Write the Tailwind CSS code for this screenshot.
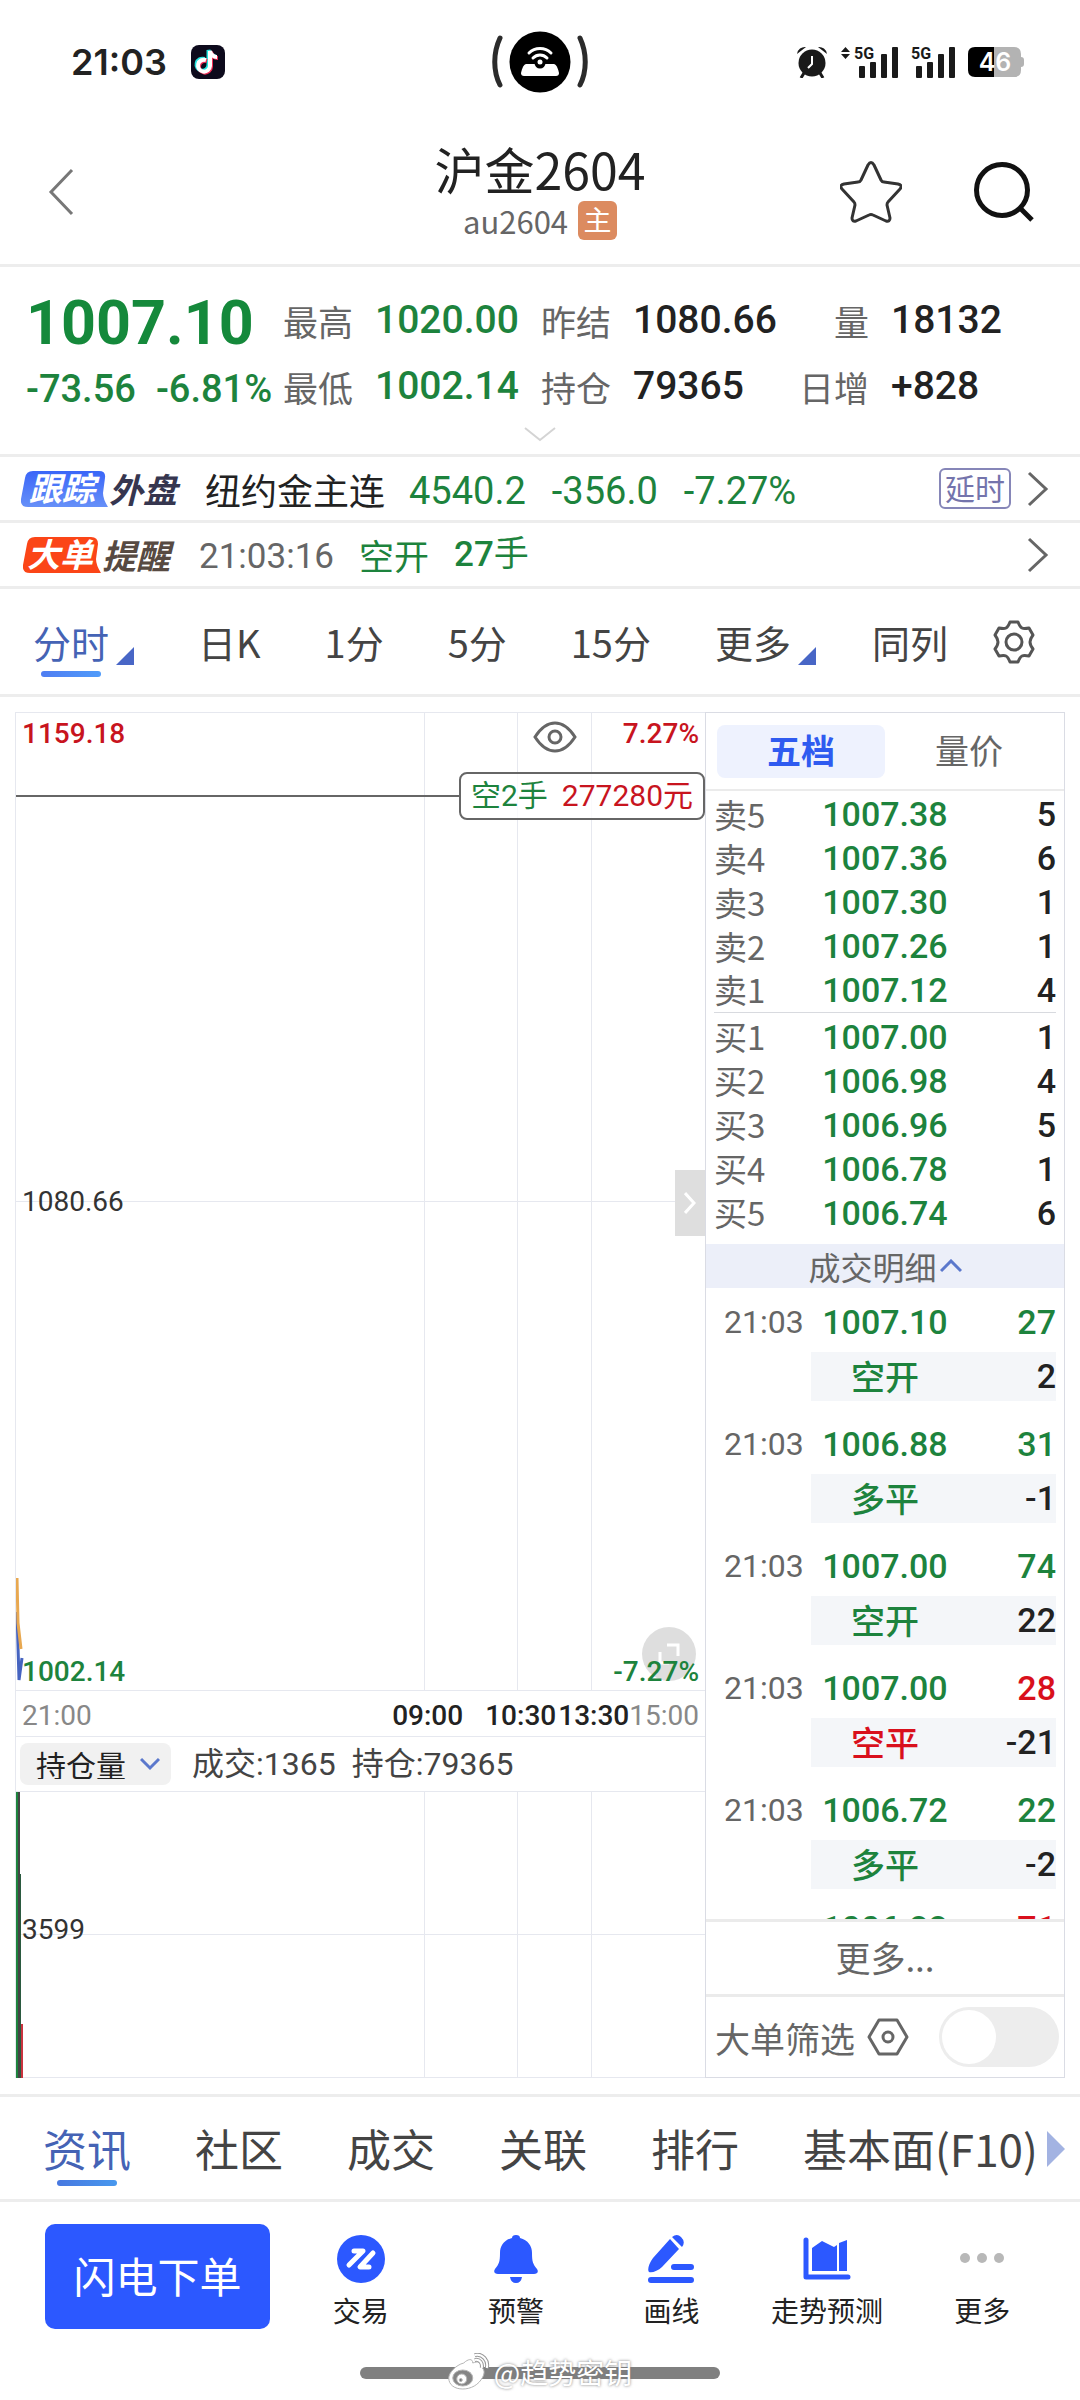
<!DOCTYPE html>
<html lang="zh-CN">
<head>
    <meta charset="UTF-8">
    <meta name="viewport" content="width=device-width, initial-scale=1.0">
    <title>沪金2604</title>
    <script src="https://cdn.jsdelivr.net/npm/@tailwindcss/browser@4"></script>
</head>

<body class="bg-white text-[#222] font-['Noto_Sans_CJK_SC',sans-serif] leading-none">

    <!-- Status bar -->
    <div class="grid grid-cols-[1fr_auto_1fr] items-center h-[124px] px-[56px]">
        <div class="flex items-center gap-6 pl-[15px]">
            <span class="font-['Inter',sans-serif] font-semibold text-[36px]">21:03</span>
            <svg class="w-[34px] h-[34px]" viewBox="0 0 34 34">
                <rect width="34" height="34" rx="8" fill="#0d0a1c"/>
                <g fill="none" stroke-width="4">
                    <path d="M15 15a6 6 0 1 0 4 6V6c1 4 3 6 7 6" stroke="#25e5e0" transform="translate(-1.5 -1)"/>
                    <path d="M15 15a6 6 0 1 0 4 6V6c1 4 3 6 7 6" stroke="#f22c56" transform="translate(1 1)"/>
                    <path d="M15 15a6 6 0 1 0 4 6V6c1 4 3 6 7 6" stroke="#fff"/>
                </g>
            </svg>
        </div>
        <svg class="w-[96px] h-[62px]" viewBox="0 0 96 62">
            <g fill="none" stroke="#2b2b2b" stroke-width="5" stroke-linecap="round">
                <path d="M8 7C1 22 1 40 8 54M88 7c7 15 7 33 0 47"/>
            </g>
            <circle cx="48" cy="31" r="30.500"/>
            <path d="M34 33h28c3 1 4 5 5 9 0 2-1 3-3 3H32c-2 0-3-1-3-3 1-4 2-8 5-9z" fill="#fff"/>
            <circle cx="48" cy="32" r="5.500"/>
            <circle cx="48" cy="31" r="2.500" fill="#fff"/>
            <g fill="none" stroke="#fff" stroke-width="3" stroke-linecap="round">
                <path d="M37 22c6-6 16-6 22 0M41 27c4-4 10-4 14 0"/>
            </g>
        </svg>
        <div class="flex items-center justify-end gap-[13px]">
            <svg class="w-[32px] h-[32px]" viewBox="0 0 32 32" fill="#1a1a1a">
                <circle cx="16" cy="17" r="13.500"/>
                <path d="M8 27l-3 5M24 27l3 5" stroke="#1a1a1a" stroke-width="3"/>
                <path d="M1 8a8 8 0 0 1 9-7zM31 8a8 8 0 0 0-9-7z"/>
                <path d="M16 10v8l-4 4" fill="none" stroke="#fff" stroke-width="2"/>
            </svg>
            <svg class="w-[57px] h-[32px] overflow-visible" viewBox="0 0 57 32" fill="#1a1a1a">
                <path d="M0 6l4.500-5L9 6zM0 8h9l-4.500 5z"/>
                <text x="13" y="13" class="font-['Roboto'] font-bold text-[16px]">5G</text>
                <rect x="18" y="20" width="6" height="12" rx="1"/><rect x="29" y="16" width="6" height="16" rx="1"/>
                <rect x="40" y="8" width="6" height="24" rx="1"/><rect x="51" y="1" width="6" height="31" rx="1"/>
            </svg>
            <svg class="w-[44px] h-[32px] overflow-visible" viewBox="0 0 44 32" fill="#1a1a1a">
                <text x="0" y="13" class="font-['Roboto'] font-bold text-[16px]">5G</text>
                <rect x="5" y="20" width="6" height="12" rx="1"/><rect x="16" y="16" width="6" height="16" rx="1"/>
                <rect x="27" y="8" width="6" height="24" rx="1"/><rect x="38" y="1" width="6" height="31" rx="1"/>
            </svg>
            <svg class="w-[56px] h-[30px]" viewBox="0 0 56 30">
                <path d="M26 0h20q7 0 7 7v3q3 0 3 3v4q0 3-3 3v3q0 7-7 7H26z" fill="#b3b3b3"/>
                <path d="M26 0H7Q0 0 0 7v16q0 7 7 7h19z"/>
                <text x="27" y="24" text-anchor="middle" fill="#fff" class="font-['Inter'] font-semibold text-[25px]">46</text>
            </svg>
        </div>
    </div>

    <!-- Title bar -->
    <header class="grid grid-cols-[1fr_auto_1fr] items-center h-[143px] px-[46px] pb-[5px] border-b-3 border-[#ededed]">
        <button aria-label="返回" class="w-[32px]">
            <svg class="w-[32px] h-[48px]" viewBox="0 0 32 48" fill="none" stroke="#777" stroke-width="3"><path d="M26 2L5 24l21 22"/></svg>
        </button>
        <div class="flex flex-col items-center gap-[8px]">
            <h1 class="text-[50px]">沪金2604</h1>
            <p class="flex items-center gap-[10px] text-[31px] text-[#666]">au2604
                <span class="flex items-center justify-center size-[39px] pb-1 rounded-md bg-[#dc8b60] text-white text-[28px]">主</span>
            </p>
        </div>
        <div class="flex items-center justify-end gap-[72px]">
            <button aria-label="自选">
                <svg class="w-[62px] h-[62px]" viewBox="0 0 62 62" fill="none" stroke="#333" stroke-width="3" stroke-linejoin="round">
                    <path d="M28 4q3-5 6 0l7 15q1 2 3 2l14 2q5 1 2 5L48 41q-1 1-1 3l3 13q0 4-4 3l-13-6q-2-1-4 0l-13 6q-4 1-4-3l3-13q0-2-1-3L2 28q-3-4 2-5l14-2q2 0 3-2z"/>
                </svg>
            </button>
            <button aria-label="搜索">
                <svg class="w-[60px] h-[60px]" viewBox="0 0 60 60" fill="none" stroke="#111" stroke-width="5"><circle cx="28" cy="28" r="25.500"/><path d="M46 46l12 12"/></svg>
            </button>
        </div>
    </header>

    <!-- Quote -->
    <section class="pt-5 border-b-3 border-[#ededed]">
        <div class="grid grid-cols-[257px_258px_258px_1fr] pl-[26px] items-center auto-rows-[66px] text-[35px] text-[#666]">
            <div class="pt-[6px] font-['Roboto'] font-bold text-[61px] text-[#15893b]">1007.10</div>
            <div class="flex items-center gap-[22px]">最高<b class="font-['Roboto'] font-medium text-[39px] text-[#1d833d]">1020.00</b></div>
            <div class="flex items-center gap-[22px]">昨结<b class="font-['Roboto'] font-medium text-[39px] text-[#222]">1080.66</b></div>
            <div class="flex items-center gap-[22px]"><span class="w-[70px] text-right">量</span><b class="font-['Roboto'] font-medium text-[39px] text-[#222]">18132</b></div>
            <div class="flex gap-[20px] pt-[6px] whitespace-nowrap font-['Roboto'] font-medium text-[38px] text-[#1d833d]"><span>-73.56</span><span>-6.81%</span></div>
            <div class="flex items-center gap-[22px]">最低<b class="font-['Roboto'] font-medium text-[39px] text-[#1d833d]">1002.14</b></div>
            <div class="flex items-center gap-[22px]">持仓<b class="font-['Roboto'] font-medium text-[39px] text-[#222]">79365</b></div>
            <div class="flex items-center gap-[22px]"><span class="w-[70px] text-right">日增</span><b class="font-['Roboto'] font-medium text-[39px] text-[#222]">+828</b></div>
        </div>
        <button aria-label="展开" class="flex justify-center w-full h-[35px] pt-2">
            <svg class="w-[32px] h-[15px]" viewBox="0 0 32 15" fill="none" stroke="#d4d4d4" stroke-width="2"><path d="M1 1l15 12L31 1"/></svg>
        </button>
    </section>

    <a href="#" class="flex items-center h-[66px] pl-[21px] pr-[31px] border-b-3 border-[#ededed]">
        <span class="grid w-[88px] h-[36px]">
            <svg class="col-start-1 row-start-1 w-[88px] h-[36px]" viewBox="0 0 88 36">
                <defs><linearGradient id="track" x2="0" y2="1"><stop stop-color="#3a66f8"/><stop offset="1" stop-color="#6690f8"/></linearGradient></defs>
                <path d="M12 0h66q7 0 6 7l-2 15q0 6 5 14H7q-8 0-7-8L4 7q1-7 8-7z" fill="url(#track)"/>
            </svg>
            <b class="col-start-1 row-start-1 pl-2 text-[33px] italic text-white">跟踪</b>
        </span>
        <b class="w-[96px] text-[34px] italic text-[#36364f]">外盘</b>
        <span class="text-[36px]">纽约金主连</span>
        <span class="flex gap-[26px] pl-6 pt-1 font-['Roboto'] text-[38px] text-[#1d833d]"><span>4540.2</span><span>-356.0</span><span>-7.27%</span></span>
        <span class="ml-auto mr-[16px] flex items-center h-[41px] px-1 pb-1 border-2 border-[#8686b8] rounded-md text-[30px] text-[#7474ac]">延时</span>
        <svg class="w-[22px] h-[36px]" viewBox="0 0 22 36" fill="none" stroke="#666" stroke-width="3"><path d="M2 2l17 16L2 34"/></svg>
    </a>
    <a href="#" class="flex items-center h-[66px] pl-[23px] pr-[31px] border-b-3 border-[#ededed]">
        <span class="grid w-[79px] h-[36px]">
            <svg class="col-start-1 row-start-1 w-[79px] h-[36px]" viewBox="0 0 79 36">
                <path d="M12 0h56q7 0 7 7l-2 15q0 6 5 14H7q-8 0-7-8L4 7q1-7 8-7z" fill="#fb4517"/>
            </svg>
            <b class="col-start-1 row-start-1 pl-1 text-[33px] italic text-white">大单</b>
        </span>
        <b class="w-[97px] text-[34px] italic text-[#574a42]">提醒</b>
        <span class="w-[160px] pt-1 font-['Roboto'] text-[35px] text-[#666]">21:03:16</span>
        <span class="w-[95px] text-[35px] text-[#1d833d]">空开</span>
        <span class="font-['Roboto','Noto_Sans_CJK_SC'] text-[35px] text-[#1d833d]"><b class="font-medium">27</b>手</span>
        <svg class="ml-auto w-[22px] h-[36px]" viewBox="0 0 22 36" fill="none" stroke="#666" stroke-width="3"><path d="M2 2l17 16L2 34"/></svg>
    </a>

    <!-- Period tabs -->
    <nav class="flex items-center gap-[64px] h-[108px] pl-[33px] whitespace-nowrap border-b-3 border-[#ededed] text-[38px] text-[#444]">
        <button class="relative flex items-end gap-[7px] text-[#4563b5]">分时
            <svg class="w-[18px] h-[18px] translate-y-1" viewBox="0 0 18 18"><path d="M18 0v18H0z" fill="#4866c6"/></svg>
            <span class="absolute left-2 top-[48px] w-[60px] h-[6px] rounded-full bg-linear-to-r from-[#4f7df2] to-[#4f9bfa]"></span>
        </button>
        <button>日K</button>
        <button>1分</button>
        <button>5分</button>
        <button>15分</button>
        <button class="flex items-end gap-[7px]">更多
            <svg class="w-[18px] h-[18px] translate-y-1" viewBox="0 0 18 18"><path d="M18 0v18H0z" fill="#4866c6"/></svg>
        </button>
        <button class="-ml-2">同列</button>
        <button aria-label="设置" class="-ml-5">
            <svg class="w-[44px] h-[44px]" viewBox="0 0 44 44" fill="none" stroke="#555" stroke-width="3" stroke-linejoin="round">
                <path d="M18 2h8q2 5 4 6t7 0l4 7q-3 4-3 7t3 7l-4 7q-5-1-7 0t-4 6h-8q-2-5-4-6t-7 0l-4-7q3-4 3-7t-3-7l4-7q5 1 7 0t4-6z"/>
                <circle cx="22" cy="22" r="8"/>
            </svg>
        </button>
    </nav>

    <main class="flex h-[1400px] px-[15px] pt-[15px] pb-4 border-b-3 border-[#ededed]">

        <!-- Charts -->
        <div class="flex flex-col flex-1 border-l border-[#e6e8ef] font-['Roboto','Noto_Sans_CJK_SC'] text-[28px]">
            <div class="relative flex-1 grid grid-cols-[409fr_93fr_74fr_113fr] grid-rows-2 border-y border-[#e6e8ef]">
                <div class="border-r border-b border-[#e6e8ef]"></div><div class="border-r border-b border-[#e6e8ef]"></div><div class="border-r border-b border-[#e6e8ef]"></div><div class="border-b border-[#e6e8ef]"></div>
                <div class="border-r border-[#e6e8ef]"></div><div class="border-r border-[#e6e8ef]"></div><div class="border-r border-[#e6e8ef]"></div><div></div>

                <svg class="absolute left-0 bottom-0 w-[8px] h-[114px]" viewBox="0 0 8 114" fill="none" stroke-width="2">
                    <path d="M1 36l2 68 3-22" stroke="#4563c0" stroke-width="3"/><path d="M1 2l1 45 3 26" stroke="#e8a850" stroke-width="3"/>
                </svg>
                <span class="absolute left-[6px] top-[7px] font-medium text-[#c8141e]">1159.18</span>
                <span class="absolute right-[6px] top-[7px] font-medium text-[#c8141e]">7.27%</span>
                <span class="absolute left-[6px] top-1/2 -translate-y-1/2 text-[#333]">1080.66</span>
                <span class="absolute left-[6px] bottom-1 font-medium text-[#1d833d]">1002.14</span>
                <span class="absolute right-[9px] bottom-[9px] flex items-center justify-center size-[54px] rounded-full bg-black/13">
                    <svg class="size-[22px]" viewBox="0 0 22 22" fill="none" stroke="#fff" stroke-width="3"><path d="M9 2h11v11M2 9v11h9"/></svg>
                </span>
                <span class="absolute right-[6px] bottom-1 font-medium text-[#1d833d]">-7.27%</span>
                <button aria-label="显示" class="absolute right-[128px] top-[8px]">
                    <svg class="w-[44px] h-[32px]" viewBox="0 0 44 32" fill="none" stroke="#666" stroke-width="3"><path d="M2 16Q11 2 22 2t20 14Q33 30 22 30T2 16z"/><circle cx="22" cy="16" r="6"/></svg>
                </button>
                <div class="absolute inset-x-0 top-[59px] flex items-center">
                    <span class="flex-1 h-[2px] bg-[#666]"></span>
                    <span class="flex items-center gap-[14px] h-[48px] px-[10px] border-2 border-[#666] rounded-lg bg-white/80 text-[30px] text-[#c8141e]"><span class="text-[#1d833d]">空2手</span>277280元</span>
                </div>
                <button aria-label="收起" class="absolute right-0 top-[457px] flex items-center justify-center w-[30px] h-[66px] bg-[#dedede]">
                    <svg class="w-[12px] h-[22px]" viewBox="0 0 12 22" fill="none" stroke="#fff" stroke-width="3"><path d="M1 1l9 10-9 10"/></svg>
                </button>
            </div>

            <div class="flex items-center h-[45px] px-[6px] pt-[5px] font-medium">
                <span class="mr-auto font-normal text-[#888]">21:00</span>
                <span>09:00</span><span class="ml-[22px]">10:30</span><span class="ml-[2px]">13:30</span>
                <span class="font-normal text-[#888]">15:00</span>
            </div>

            <div class="flex items-center h-[55px] pl-1 border-t border-[#e6e8ef] text-[32px] text-[#444]">
                <div class="relative mr-[21px]">
                    <select aria-label="指标" class="appearance-none w-[151px] h-[42px] pl-4 rounded-lg bg-[#f1f1f1] font-['Noto_Sans_CJK_SC'] leading-none text-[30px] text-[#222]"><option>持仓量</option></select>
                    <svg class="absolute right-[11px] top-[14px] w-[20px] h-[14px]" viewBox="0 0 20 14" fill="none" stroke="#5b78cc" stroke-width="3"><path d="M1 2l9 9 9-9"/></svg>
                </div>
                <span>成交:1365</span><span class="ml-4">持仓:79365</span>
            </div>

            <div class="relative grid grid-cols-[409fr_93fr_74fr_113fr] grid-rows-2 h-[287px] border-y border-[#e6e8ef]">
                <div class="border-r border-b border-[#e6e8ef]"></div><div class="border-r border-b border-[#e6e8ef]"></div><div class="border-r border-b border-[#e6e8ef]"></div><div class="border-b border-[#e6e8ef]"></div>
                <div class="border-r border-[#e6e8ef]"></div><div class="border-r border-[#e6e8ef]"></div><div class="border-r border-[#e6e8ef]"></div><div></div>
                <svg class="absolute left-0 top-0 w-[8px] h-[286px]" viewBox="0 0 8 286">
                    <path d="M0 0h4v286H0z" fill="#1d833d"/><path d="M2 82h3v204H2z" fill="#2b5a40"/><path d="M2 0h2v286H2z" fill="#444"/><path d="M5 232h2v54H5z" fill="#c9333f"/>
                </svg>
                <span class="absolute left-[6px] top-[124px] text-[#333]">3599</span>
            </div>
        </div>

        <!-- Order book -->
        <aside class="flex flex-col w-[360px] border border-[#dadce4]">
            <div class="flex items-center h-[78px] px-[11px] border-b-2 border-[#ebebeb] text-[34px]">
                <button class="w-[168px] h-[53px] pb-[2px] rounded-lg bg-[#eef2fe] font-bold text-[#2f5bf0]">五档</button>
                <button class="flex-1 pb-[2px] text-[#666]">量价</button>
            </div>
            <table class="table-fixed mx-2 mt-px mb-[2px] font-['Roboto'] font-medium text-[34px] border-b border-[#d8dadf]">
                <colgroup><col class="w-[97px]"><col class="w-[148px]"><col></colgroup>
                <tbody>
                    <tr class="h-[44px]"><th class="text-left font-normal text-[33px] font-['Noto_Sans_CJK_SC'] text-[#666]">卖5</th><td class="text-center text-[#1d833d]">1007.38</td><td class="text-right">5</td></tr>
                    <tr class="h-[44px]"><th class="text-left font-normal text-[33px] font-['Noto_Sans_CJK_SC'] text-[#666]">卖4</th><td class="text-center text-[#1d833d]">1007.36</td><td class="text-right">6</td></tr>
                    <tr class="h-[44px]"><th class="text-left font-normal text-[33px] font-['Noto_Sans_CJK_SC'] text-[#666]">卖3</th><td class="text-center text-[#1d833d]">1007.30</td><td class="text-right">1</td></tr>
                    <tr class="h-[44px]"><th class="text-left font-normal text-[33px] font-['Noto_Sans_CJK_SC'] text-[#666]">卖2</th><td class="text-center text-[#1d833d]">1007.26</td><td class="text-right">1</td></tr>
                    <tr class="h-[44px]"><th class="text-left font-normal text-[33px] font-['Noto_Sans_CJK_SC'] text-[#666]">卖1</th><td class="text-center text-[#1d833d]">1007.12</td><td class="text-right">4</td></tr>
                </tbody>
            </table>
            <table class="table-fixed mx-2 mb-[9px] font-['Roboto'] font-medium text-[34px]">
                <colgroup><col class="w-[97px]"><col class="w-[148px]"><col></colgroup>
                <tbody>
                    <tr class="h-[44px]"><th class="text-left font-normal text-[33px] font-['Noto_Sans_CJK_SC'] text-[#666]">买1</th><td class="text-center text-[#1d833d]">1007.00</td><td class="text-right">1</td></tr>
                    <tr class="h-[44px]"><th class="text-left font-normal text-[33px] font-['Noto_Sans_CJK_SC'] text-[#666]">买2</th><td class="text-center text-[#1d833d]">1006.98</td><td class="text-right">4</td></tr>
                    <tr class="h-[44px]"><th class="text-left font-normal text-[33px] font-['Noto_Sans_CJK_SC'] text-[#666]">买3</th><td class="text-center text-[#1d833d]">1006.96</td><td class="text-right">5</td></tr>
                    <tr class="h-[44px]"><th class="text-left font-normal text-[33px] font-['Noto_Sans_CJK_SC'] text-[#666]">买4</th><td class="text-center text-[#1d833d]">1006.78</td><td class="text-right">1</td></tr>
                    <tr class="h-[44px]"><th class="text-left font-normal text-[33px] font-['Noto_Sans_CJK_SC'] text-[#666]">买5</th><td class="text-center text-[#1d833d]">1006.74</td><td class="text-right">6</td></tr>
                </tbody>
            </table>

            <button class="flex items-center justify-center h-[44px] shrink-0 bg-[#eceff9] text-[32px] text-[#666]">成交明细
                <svg class="ml-[3px] w-[22px] h-[14px]" viewBox="0 0 22 14" fill="none" stroke="#5b78cc" stroke-width="3"><path d="M1 12L11 2l10 10"/></svg>
            </button>

            <!-- the last trade runs under the footer -->
            <div class="flex-1 min-h-0 overflow-hidden">
                <table class="table-fixed w-full font-['Roboto','Noto_Sans_CJK_SC'] font-medium text-[34px] text-[#1d833d]">
                    <colgroup><col class="w-[105px]"><col class="w-[148px]"><col><col class="w-2"></colgroup>
                    <tbody>
                        <tr class="h-[64px]"><td class="pl-[18px] pt-1 font-normal text-[32px] text-[#666]">21:03</td><td class="pt-1 text-center">1007.10</td><td class="pt-1 text-right">27</td><td></td></tr>
                        <tr class="h-[49px]"><td></td><td class="bg-[#f4f6f9] text-center font-['Noto_Sans_CJK_SC']">空开</td><td class="bg-[#f4f6f9] text-right text-[#222]">2</td><td></td></tr>
                        <tr class="h-[9px]"></tr>
                        <tr class="h-[64px]"><td class="pl-[18px] pt-1 font-normal text-[32px] text-[#666]">21:03</td><td class="pt-1 text-center">1006.88</td><td class="pt-1 text-right">31</td><td></td></tr>
                        <tr class="h-[49px]"><td></td><td class="bg-[#f4f6f9] text-center font-['Noto_Sans_CJK_SC']">多平</td><td class="bg-[#f4f6f9] text-right text-[#222]">-1</td><td></td></tr>
                        <tr class="h-[9px]"></tr>
                        <tr class="h-[64px]"><td class="pl-[18px] pt-1 font-normal text-[32px] text-[#666]">21:03</td><td class="pt-1 text-center">1007.00</td><td class="pt-1 text-right">74</td><td></td></tr>
                        <tr class="h-[49px]"><td></td><td class="bg-[#f4f6f9] text-center font-['Noto_Sans_CJK_SC']">空开</td><td class="bg-[#f4f6f9] text-right text-[#222]">22</td><td></td></tr>
                        <tr class="h-[9px]"></tr>
                        <tr class="h-[64px]"><td class="pl-[18px] pt-1 font-normal text-[32px] text-[#666]">21:03</td><td class="pt-1 text-center">1007.00</td><td class="pt-1 text-right text-[#d9101c]">28</td><td></td></tr>
                        <tr class="h-[49px]"><td></td><td class="bg-[#f4f6f9] text-center font-['Noto_Sans_CJK_SC'] text-[#d9101c]">空平</td><td class="bg-[#f4f6f9] text-right text-[#222]">-21</td><td></td></tr>
                        <tr class="h-[9px]"></tr>
                        <tr class="h-[64px]"><td class="pl-[18px] pt-1 font-normal text-[32px] text-[#666]">21:03</td><td class="pt-1 text-center">1006.72</td><td class="pt-1 text-right">22</td><td></td></tr>
                        <tr class="h-[49px]"><td></td><td class="bg-[#f4f6f9] text-center font-['Noto_Sans_CJK_SC']">多平</td><td class="bg-[#f4f6f9] text-right text-[#222]">-2</td><td></td></tr>
                        <tr class="h-[9px]"></tr>
                        <tr class="h-[60px]"><td></td><td class="text-center">1006.88</td><td class="text-right text-[#d9101c]">71</td><td></td></tr>
                    </tbody>
                </table>
            </div>

            <button class="h-[75px] shrink-0 pb-1 border-t-3 border-[#ebebeb] text-[35px] text-[#666]">更多...</button>
            <div class="flex items-center h-[83px] shrink-0 pl-[9px] pr-[5px] border-t-3 border-[#ebebeb] text-[35px] text-[#666]">
                <label for="big">大单筛选</label>
                <svg class="ml-[12px] w-[42px] h-[38px]" viewBox="0 0 42 38" fill="none" stroke="#666" stroke-width="3" stroke-linejoin="round"><path d="M12 2h18l10 17-10 17H12L2 19z"/><circle cx="21" cy="19" r="5"/></svg>
                <input id="big" type="checkbox" class="ml-auto appearance-none shrink-0 w-[120px] h-[60px] p-[3px] rounded-full bg-[#ededed] before:block before:size-[54px] before:rounded-full before:bg-white checked:bg-[#2c58ff]">
            </div>
        </aside>
    </main>

    <!-- Content tabs -->
    <nav class="relative flex items-center gap-[64px] h-[105px] pl-[43px] overflow-hidden whitespace-nowrap border-b-3 border-[#ededed] text-[44px] text-[#444]">
        <button class="relative text-[#4563b5]">资讯
            <span class="absolute left-[14px] top-[54px] w-[60px] h-[6px] rounded-full bg-linear-to-r from-[#4878e0] to-[#4898ee]"></span>
        </button>
        <button>社区</button>
        <button>成交</button>
        <button>关联</button>
        <button>排行</button>
        <button>基本面(F10)</button>
        <svg class="absolute right-[15px] top-[34px] w-[18px] h-[36px]" viewBox="0 0 18 36"><path d="M0 0l18 18L0 36z" fill="#a3b3e2"/></svg>
    </nav>

    <!-- Bottom bar -->
    <footer class="flex items-start pt-[22px] pl-[45px] pr-5 text-[28px]">
        <button class="w-[225px] h-[105px] pb-1 mr-[13px] rounded-[10px] bg-[#2c58ff] text-white text-[42px]">闪电下单</button>
        <div class="grid grid-cols-5 flex-1 pt-[10px]">
            <button class="flex flex-col items-center gap-3">
                <svg class="size-[50px]" viewBox="0 0 50 50"><circle cx="25" cy="25" r="24" fill="#2c58ff"/><path d="M18 17h9L13 31M37 19L24 33h9" fill="none" stroke="#fff" stroke-width="5" stroke-linecap="round" stroke-linejoin="round"/></svg>
                交易
            </button>
            <button class="flex flex-col items-center gap-3">
                <svg class="size-[50px]" viewBox="0 0 50 50" fill="#2c58ff"><path d="M21 4q0-3 4-3t4 3c8 2 12 8 12 15 0 9 1 11 5 16 2 3 0 5-3 5H7c-3 0-5-2-3-5 4-5 5-7 5-16 0-7 4-13 12-15zM19 43h12q-1 6-6 6t-6-6z"/></svg>
                预警
            </button>
            <button class="flex flex-col items-center gap-3">
                <svg class="size-[50px]" viewBox="0 0 50 50" fill="#2c58ff"><path d="M24 5l9 10-17 18c-4 4-10 6-13 5-2-2 0-9 4-14zM26 3q5-4 9 0 5 5 1 10z"/><path d="M28 33h17M5 46h40" stroke="#2c58ff" stroke-width="6" stroke-linecap="round"/></svg>
                画线
            </button>
            <button class="flex flex-col items-center gap-3 whitespace-nowrap">
                <svg class="size-[50px]" viewBox="0 0 50 50" fill="#2c58ff"><path d="M4 6v37h42" fill="none" stroke="#2c58ff" stroke-width="5" stroke-linecap="round" stroke-linejoin="round"/><path d="M10 14l10-7 12 6 3-2v26H10zM37 9l8-3v31h-8z"/></svg>
                走势预测
            </button>
            <button class="flex flex-col items-center gap-3">
                <svg class="size-[50px]" viewBox="0 0 50 50" fill="#b8b8b8"><circle cx="8" cy="24" r="5"/><circle cx="25" cy="24" r="5"/><circle cx="42" cy="24" r="5"/></svg>
                更多
            </button>
        </div>
    </footer>

    <!-- Home indicator -->
    <div class="relative flex justify-center pt-[38px] pb-[21px]">
        <div class="w-1/3 h-[12px] rounded-full bg-[#808080]"></div>
        <div class="absolute top-[24px] left-1/2 -translate-x-1/2 flex items-center gap-[4px] text-[28px] text-white text-shadow-[0_0_3px_#777] whitespace-nowrap">
            <svg class="w-[42px] h-[38px]" viewBox="0 0 42 38" fill="#fff" stroke="#b5b5b5" stroke-width="1">
                <path d="M16 10c4-4 9-5 9 0 5-2 9-1 8 4 4 2 4 6 2 10-4 8-12 12-20 12S1 32 1 25c0-5 7-13 15-15z"/>
                <ellipse cx="15" cy="25" rx="10" ry="8" fill="#858585"/><circle cx="14" cy="26" r="5"/><circle cx="13" cy="27" r="1.500" fill="#777"/>
                <path d="M27 2c8-2 14 6 12 13M27 7c5-1 8 3 7 8" fill="none" stroke="#999" stroke-width="4"/><path d="M27 2c8-2 14 6 12 13M27 7c5-1 8 3 7 8" fill="none" stroke="#fff" stroke-width="2"/>
            </svg>
            @趋势密钥
        </div>
    </div>
</body>
</html>
